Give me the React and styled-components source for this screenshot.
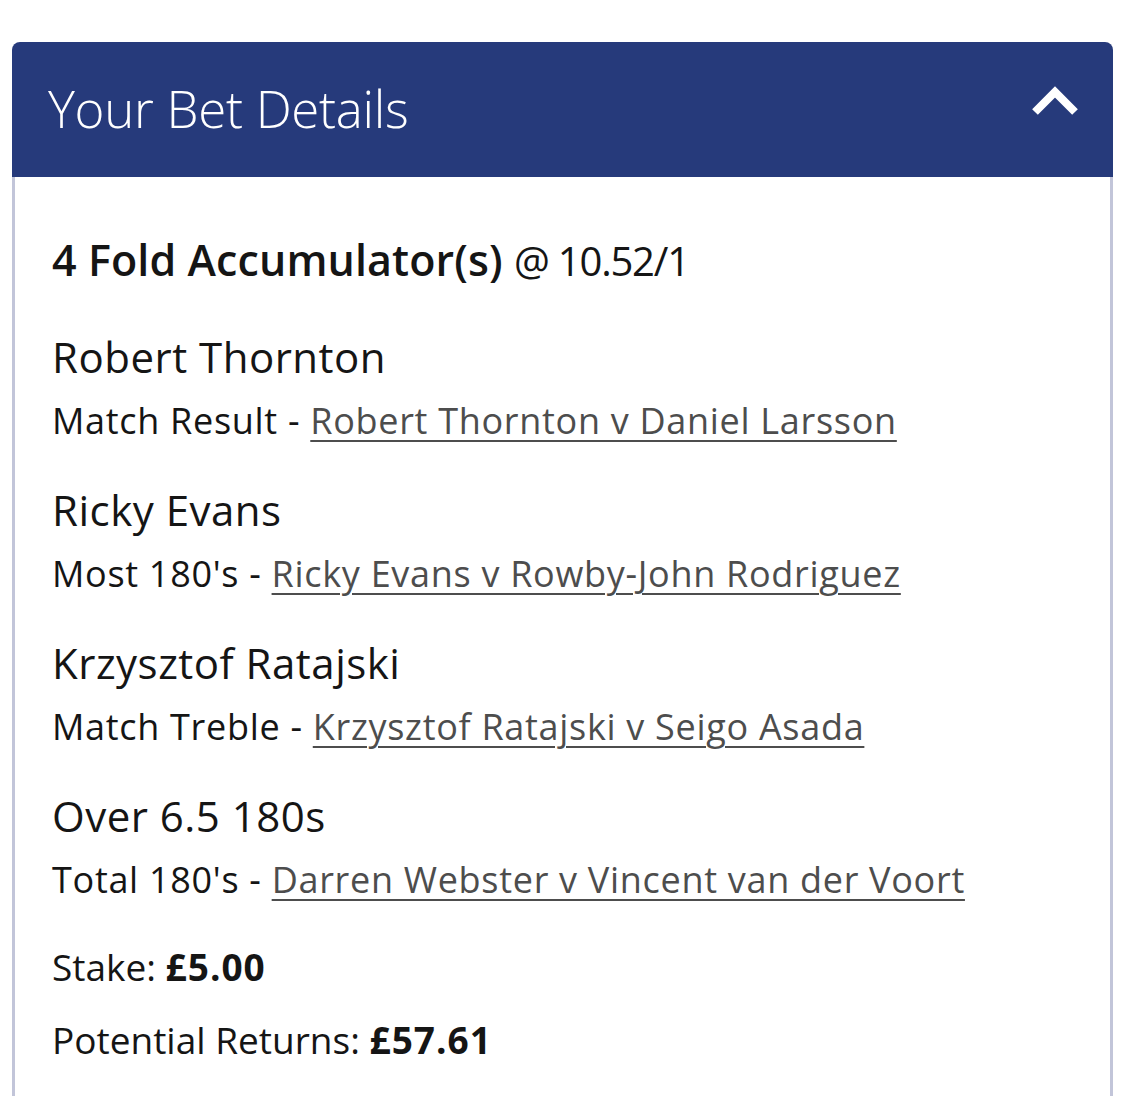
import React from 'react';
import styled, { createGlobalStyle } from 'styled-components';

const GlobalStyle = createGlobalStyle`
  body {
    margin: 0;
    background: #fff;
    font-family: "Open Sans", "Noto Sans", sans-serif;
  }
`;

const selections = [
  { name: 'Robert Thornton', market: 'Match Result', event: 'Robert Thornton v Daniel Larsson' },
  { name: 'Ricky Evans', market: "Most 180's", event: 'Ricky Evans v Rowby-John Rodriguez' },
  { name: 'Krzysztof Ratajski', market: 'Match Treble', event: 'Krzysztof Ratajski v Seigo Asada' },
  { name: 'Over 6.5 180s', market: "Total 180's", event: 'Darren Webster v Vincent van der Voort' },
];

const App = () => {
  return (
    <Page>
      <GlobalStyle />
      <Card>
        <Header>
          <Title>Your Bet Details</Title>
          <Chevron viewBox="0 0 48 32" aria-hidden="true">
            <path d="M4 28 L24 8 L44 28" fill="none" stroke="#fff" strokeWidth="8" strokeLinejoin="miter" />
          </Chevron>
        </Header>
        <Body>
          <BetType>
            <strong>4 Fold Accumulator(s)</strong> <Odds>@ 10.52/1</Odds>
          </BetType>
          {selections.map((s) => (
            <Selection key={s.name}>
              <SelectionName>{s.name}</SelectionName>
              <Market>
                {s.market} - <EventLink href="#">{s.event}</EventLink>
              </Market>
            </Selection>
          ))}
          <Summary>
            <SummaryRow>
              Stake: <strong>£5.00</strong>
            </SummaryRow>
            <SummaryRow>
              Potential Returns: <strong>£57.61</strong>
            </SummaryRow>
          </Summary>
        </Body>
      </Card>
    </Page>
  );
};

const Page = styled.div`
  padding: 42px 12px 0 12px;
  height: 1096px;
  box-sizing: border-box;
  overflow: hidden;
`;

const Card = styled.div`
  width: 1101px;
  border-radius: 8px 8px 0 0;
  overflow: hidden;
`;

const Header = styled.div`
  display: flex;
  align-items: center;
  justify-content: space-between;
  height: 135px;
  padding: 0 34px 0 36px;
  background-color: #263a7b;
  box-sizing: border-box;
`;

const Title = styled.h2`
  margin: 0 0 4px 0;
  color: #fff;
  font-weight: 300;
  font-size: 51px;
  letter-spacing: -0.3px;
`;

const Chevron = styled.svg`
  width: 48px;
  height: 32px;
  margin-bottom: 20px;
`;

const Body = styled.div`
  border-left: 3px solid #c2c5d9;
  border-right: 3px solid #c2c5d9;
  padding: 58px 37px 40px 37px;
  color: #151515;
`;

const BetType = styled.div`
  font-size: 43px;
  line-height: 50px;
  letter-spacing: 0.1px;
  margin-bottom: 46px;

  strong {
    font-weight: 600;
  }
`;

const Odds = styled.span`
  font-size: 40px;
  letter-spacing: -1.2px;
`;

const Selection = styled.div`
  display: flex;
  flex-direction: column;
  gap: 14px;
  margin-bottom: 39px;
`;

const SelectionName = styled.div`
  font-size: 42px;
  line-height: 50px;
  letter-spacing: 0.5px;
`;

const Market = styled.div`
  font-size: 36px;
  line-height: 50px;
  letter-spacing: 0.7px;
`;

const EventLink = styled.a`
  color: #4d4d4d;
  text-decoration: underline;
  text-underline-offset: 6px;
  text-decoration-thickness: 2px;
`;

const Summary = styled.div`
  display: flex;
  flex-direction: column;
  gap: 23px;
  margin-top: -2px;
`;

const SummaryRow = styled.div`
  font-size: 37px;
  line-height: 50px;

  strong {
    font-weight: 700;
    letter-spacing: 1px;
  }
`;

export default App;
